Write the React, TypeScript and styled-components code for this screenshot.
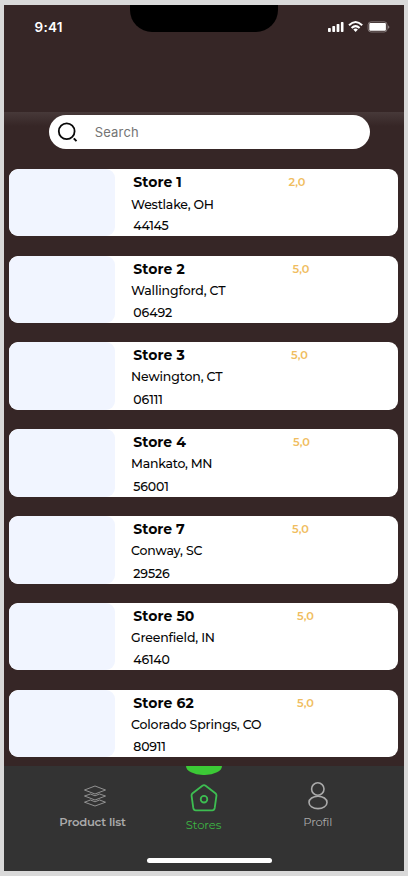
import React, { useLayoutEffect, useRef, useState } from "react";
import styled, { createGlobalStyle } from "styled-components";

const GlobalStyle = createGlobalStyle`
  * { box-sizing: border-box; }
  body { margin: 0; background: #d9d9d9; font-family: Montserrat, Inter, sans-serif; }
`;

const Page = styled.div`
  height: 876px;
  padding: 5px 4.5px 5.5px 4px;
  overflow: hidden;
  background: #d9d9d9;
`;

const Phone = styled.main`
  height: 865.5px;
  display: flex;
  flex-direction: column;
  overflow: hidden;
  background: #362626;
`;

const StatusBar = styled.header`
  height: 107px;
  flex: none;
  display: grid;
  grid-template-columns: 126px 148px 1fr;
  align-items: start;
`;

const Clock = styled.div`
  padding: 13.5px 0 0 30.5px;
  color: #fff;
  font: 600 13.5px/16px Inter, sans-serif;
`;

const Notch = styled.div`
  height: 27px;
  background: #000;
  border-radius: 0 0 22px 22px;
`;

const Signals = styled.div`
  display: flex;
  padding: 15px 0 0 49px;
`;

const SearchArea = styled.div`
  height: 56.7px;
  flex: none;
  padding: 3.3px 33.5px 0 44.7px;
  background: linear-gradient(#473939, #362626 14px);
`;

const SearchBox = styled.label`
  height: 34px;
  display: flex;
  align-items: center;
  padding-left: 8px;
  border-radius: 17px;
  background: #fff;
  color: #747474;
  font: 400 13px/18px Inter, sans-serif;
`;

const SearchLabel = styled.span`
  margin-left: 17px;
`;

const StoreList = styled.section`
  height: 597.3px;
  flex: none;
  display: flex;
  flex-direction: column;
  gap: 19.6px;
  padding: 0 5.2px 0 5.3px;
`;

const Card = styled.article`
  height: 67.3px;
  flex: none;
  display: grid;
  grid-template-columns: 106px 1fr;
  border-radius: 9px;
  overflow: hidden;
  background: #fff;
`;

const Thumbnail = styled.div`
  border-radius: 9px;
  background: #f1f5ff;
`;

const Details = styled.div`
  color: #050505;
`;

const TitleRow = styled.div<{ $rating: number }>`
  height: 26px;
  display: grid;
  grid-template-columns: ${(p) => p.$rating - 133.3}px 1fr;
  padding: 4px 0 0 18px;
`;

const Name = styled.h2`
  margin: 0;
  font-weight: 700;
  font-size: 14px;
  line-height: 18px;
`;

const Rating = styled.span`
  color: #f0bd60;
  font-weight: 600;
  font-size: 11.3px;
  line-height: 18px;
`;

const City = styled.div<{ $drop: number }>`
  height: 21px;
  padding: ${(p) => p.$drop}px 0 0 15.7px;
  font-size: 12.5px;
  font-weight: 500;
  line-height: 17px;
`;

const Zip = styled.div`
  padding: 1.3px 0 0 18px;
  font-size: 12.5px;
  font-weight: 500;
  line-height: 17px;
`;

const Fitted = styled.span`
  display: inline-block;
  white-space: nowrap;
`;

const Navigation = styled.nav`
  flex: 1;
  display: grid;
  grid-template-columns: 144px 111px 1fr;
  grid-template-rows: 92px 6px;
  background: #333;
`;

const Tab = styled.div<{ $kind: "product" | "store" | "profile" }>`
  display: flex;
  flex-direction: column;
  align-items: center;
  padding-left: ${(p) => (p.$kind === "product" ? 33 : 0)}px;
  padding-right: ${(p) => (p.$kind === "profile" ? 27 : 0)}px;
  color: ${(p) => (p.$kind === "store" ? "#3db543" : "#aaa")};
  font-size: 11.6px;
  font-weight: ${(p) => (p.$kind === "product" ? 600 : 400)};
  line-height: 16px;
`;

const ActiveMark = styled.div`
  width: 36px;
  height: 9.5px;
  flex: none;
  border-radius: 0 0 18px 18px / 0 0 9.5px 9.5px;
  background: #3cc936;
`;

const IconSlot = styled.div<{ $top: number; $bottom: number; $left?: number }>`
  display: flex;
  flex: none;
  padding-left: ${(p) => p.$left ?? 0}px;
  padding-top: ${(p) => p.$top}px;
  padding-bottom: ${(p) => p.$bottom}px;
`;

const HomeIndicator = styled.div`
  grid-column: 1 / -1;
  justify-self: center;
  width: 125px;
  height: 5.5px;
  margin-left: 11px;
  border-radius: 3px;
  background: #fff;
`;

/* Spreads the letters of a short label over a fixed width. */
function FitText({ width, children }: { width: number; children: string }) {
  const ref = useRef<HTMLSpanElement>(null);
  const [spacing, setSpacing] = useState(0);
  useLayoutEffect(() => {
    const natural = ref.current!.getBoundingClientRect().width;
    const next = (width - natural + spacing * children.length) / Math.max(1, children.length - 1);
    if (Math.abs(next - spacing) > 0.001) setSpacing(next);
  }, [width, children]);
  return <Fitted ref={ref} style={{ letterSpacing: spacing }}>{children}</Fitted>;
}

const stores = [
  { name: "Store 1", nameWidth: 48.5, city: "Westlake, OH", cityWidth: 83, zip: "44145", zipWidth: 35.5, rating: "2,0", ratingX: 288.5, drop: 1.7 },
  { name: "Store 2", nameWidth: 51.5, city: "Wallingford, CT", cityWidth: 94.5, zip: "06492", zipWidth: 39, rating: "5,0", ratingX: 292.5, drop: 0 },
  { name: "Store 3", nameWidth: 51.5, city: "Newington, CT", cityWidth: 91.5, zip: "06111", zipWidth: 29.5, rating: "5,0", ratingX: 291, drop: 0 },
  { name: "Store 4", nameWidth: 52.5, city: "Mankato, MN", cityWidth: 81.5, zip: "56001", zipWidth: 35.5, rating: "5,0", ratingX: 293, drop: 0 },
  { name: "Store 7", nameWidth: 51.5, city: "Conway, SC", cityWidth: 71.5, zip: "29526", zipWidth: 36.5, rating: "5,0", ratingX: 292, drop: 0 },
  { name: "Store 50", nameWidth: 61, city: "Greenfield, IN", cityWidth: 84, zip: "46140", zipWidth: 36.5, rating: "5,0", ratingX: 297, drop: 0 },
  { name: "Store 62", nameWidth: 60.5, city: "Colorado Springs, CO", cityWidth: 130.5, zip: "80911", zipWidth: 32.5, rating: "5,0", ratingX: 297, drop: 0 },
];

const SignalIcon = () => (
  <svg width="64" height="14" viewBox="0 0 64 14" fill="#fff">
    <rect x="1" y="8" width="2.8" height="4" rx=".7" />
    <rect x="5.3" y="6" width="2.8" height="6" rx=".7" />
    <rect x="9.6" y="4" width="2.8" height="8" rx=".7" />
    <rect x="13.9" y="2" width="2.6" height="10" rx=".7" />
    <g fill="none" stroke="#fff" strokeWidth="2">
      <path d="M22 5.2Q28.6-1.3 35.2 5.2M24.6 8Q28.6 4.2 32.6 8" />
    </g>
    <path d="M26.3 9.6Q28.6 7.5 30.9 9.6L28.6 12Z" />
    <rect x="41.1" y="1.8" width="19" height="10.2" rx="3" fill="none" stroke="#9b9292" strokeWidth=".7" />
    <rect x="42.3" y="3" width="16.6" height="7.8" rx="1" />
    <path d="M61.2 5.2Q63.5 7 61.2 8.8Z" fill="#9b9292" />
  </svg>
);

const SearchIcon = () => (
  <svg width="21" height="22" viewBox="0 0 21 22" fill="none" stroke="#080808" strokeWidth="1.8">
    <circle cx="9.7" cy="10.2" r="7.9" />
    <path d="M16.8 17.4l2.7 2.7" strokeWidth="2" />
  </svg>
);

const LayersIcon = () => (
  <svg width="24" height="22" viewBox="0 0 24 22" fill="none" stroke="#aaa" strokeWidth=".8" strokeLinejoin="round">
    <path d="M12 1L22.5 5 12 9 1.5 5Z" />
    <path d="M7.5 9L1.5 11 12 15 22.5 11 16.5 9 12 10.8Z" />
    <path d="M7.5 15L1.5 17.2 12 21 22.5 17.2 16.5 15 12 16.8Z" />
  </svg>
);

const StoreIcon = () => (
  <svg width="28" height="28" viewBox="0 0 28 28" fill="none" stroke="#3dbd51" strokeWidth="1.8" strokeLinejoin="round">
    <path d="M12.4 1.7Q14 .6 15.6 1.7L25.4 9.2Q26.7 10.2 26.4 12L24.7 24Q24.3 26.3 22.3 26.3H5.7Q3.7 26.3 3.3 24L1.6 12Q1.3 10.2 2.6 9.2Z" />
    <circle cx="14" cy="15.2" r="3.3" />
  </svg>
);

const ProfileIcon = () => (
  <svg width="22" height="28" viewBox="0 0 22 28" fill="none" stroke="#aaa" strokeWidth="1.6">
    <circle cx="10.8" cy="7" r="6.2" />
    <ellipse cx="11" cy="20.4" rx="9" ry="6.2" />
  </svg>
);

export default function App() {
  return (
    <Page>
      <GlobalStyle />
      <Phone>
        <StatusBar>
          <Clock><FitText width={28}>9:41</FitText></Clock>
          <Notch />
          <Signals><SignalIcon /></Signals>
        </StatusBar>
        <SearchArea>
          <SearchBox>
            <SearchIcon />
            <SearchLabel><FitText width={44}>Search</FitText></SearchLabel>
          </SearchBox>
        </SearchArea>
        <StoreList>
          {stores.map((s) => (
            <Card key={s.name}>
              <Thumbnail />
              <Details>
                <TitleRow $rating={s.ratingX}>
                  <Name><FitText width={s.nameWidth}>{s.name}</FitText></Name>
                  <Rating><FitText width={17}>{s.rating}</FitText></Rating>
                </TitleRow>
                <City $drop={s.drop}><FitText width={s.cityWidth}>{s.city}</FitText></City>
                <Zip><FitText width={s.zipWidth}>{s.zip}</FitText></Zip>
              </Details>
            </Card>
          ))}
        </StoreList>
        <Navigation>
          <Tab $kind="product">
            <IconSlot $top={19} $bottom={7} $left={5}><LayersIcon /></IconSlot>
            <FitText width={66.5}>Product list</FitText>
          </Tab>
          <Tab $kind="store">
            <ActiveMark />
            <IconSlot $top={8.5} $bottom={5}><StoreIcon /></IconSlot>
            <FitText width={35.5}>Stores</FitText>
          </Tab>
          <Tab $kind="profile">
            <IconSlot $top={16} $bottom={4}><ProfileIcon /></IconSlot>
            <FitText width={29}>Profil</FitText>
          </Tab>
          <HomeIndicator />
        </Navigation>
      </Phone>
    </Page>
  );
}
